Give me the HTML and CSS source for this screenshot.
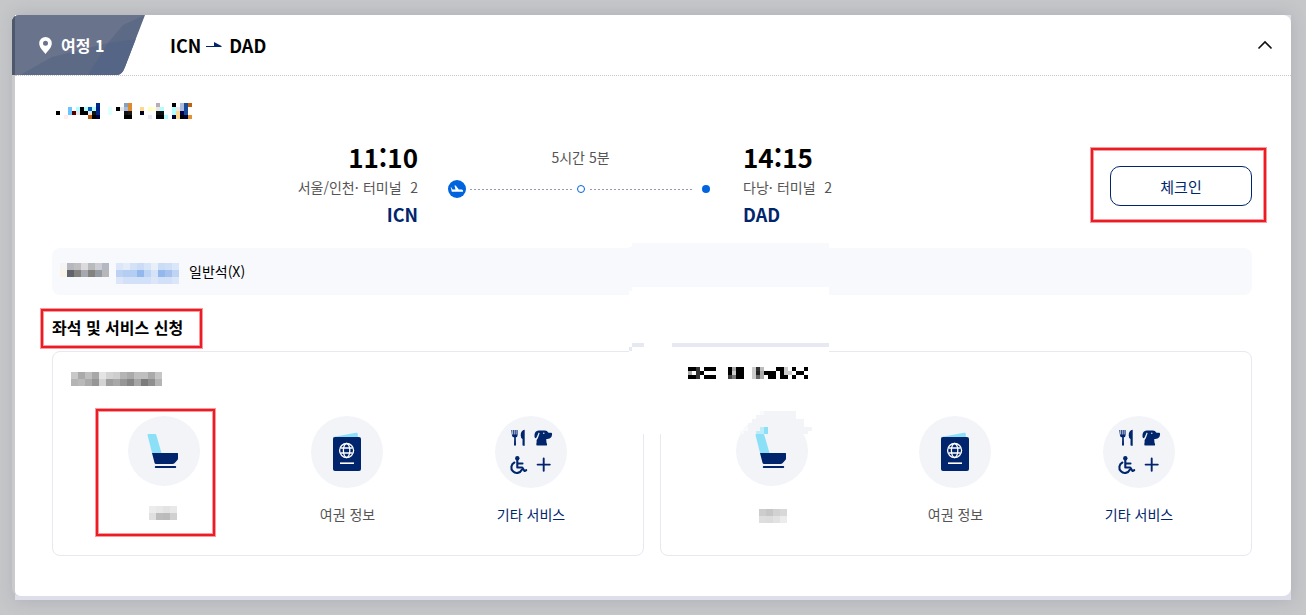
FILE: index.html
```html
<!DOCTYPE html>
<html lang="ko">
<head>
    <meta charset="UTF-8">
    <meta name="viewport" content="width=device-width, initial-scale=1.0">
    <title>여정 1</title>
    <link rel="stylesheet" href="styles.css">
</head>
<body>

<!-- Shared icons -->
<svg class="icon-defs" width="0" height="0">
    <symbol id="icon-seat" viewBox="0 0 72 72">
        <path fill="#8be0f7" d="M19.5 19q0-1 1-1h6.5q1 0 1.3 1L33.5 37H24z"/>
        <path fill="#00256c" d="M24 37h25.5q.5 0 .5.5v5q0 1-.8 1.8l-2.7 2.9q-.8.8-2 .8H28q-1.200 0-1.500-1.200z"/>
        <path fill="#00256c" d="M27.500 50h20q.7 0 .7 1t-.7 1h-20q-.7 0-.7-1t.7-1z"/>
    </symbol>
    <symbol id="icon-passport" viewBox="0 0 72 72">
        <path fill="#8be0f7" d="M22 21l23-4.300q1.800-.2 1.800 1.300v5H22z"/>
        <rect fill="#00256c" x="22" y="21" width="28" height="34" rx="2"/>
        <g fill="none" stroke="#fff" stroke-width="1.300">
            <circle cx="35.600" cy="34.500" r="7"/>
            <ellipse cx="35.600" cy="34.500" rx="3.200" ry="7"/>
            <path d="M29.500 32h12.200M29.500 37h12.200"/>
            <path stroke-width="1.600" d="M29 47.200h14"/>
        </g>
    </symbol>
    <symbol id="icon-etc" viewBox="0 0 72 72">
        <g fill="#00256c">
            <path d="M16.300 14h1v4.500h.9V14h1.200v4.500h.9V14h1.100v4.500h.5V14h.7v5q0 2-1.800 2.600l.2 7.200q0 1-1 1t-1-1l.2-7.200q-2.300-.6-2.300-2.600zM29.700 13.700v16h-1.400q-.8 0-.8-.8v-6q-1.800-.5-1.800-3.700 0-5 4-5.500z"/>
            <path d="M43.500 14.500h6.500q2 0 3.500 2.300h2.800q.9.100.8 1.600-.2 3.200-2.500 4.200-1.200.4-3.300.3v1.600q0 2 .7 3.500.5 1.500-.7 1.500h-9q-1.200 0-1-1.300.5-2 .3-4.300.8-.7 1.400-2.200l1.600-4.500-.9-.6-2.200 5q-.8 1.200-1.700.2-.5-.8-.3-3 .4-4 4-4.300z"/>
            <circle cx="22.300" cy="42.300" r="2.200"/>
        </g>
        <circle cx="48.800" cy="17.300" r=".7" fill="#f2f4f8"/>
        <g fill="none" stroke="#00256c" stroke-width="2.100" stroke-linecap="round" stroke-linejoin="round">
            <path d="M22.300 44v7.500h5l2.200 3.500 1.700-.8M22.300 47.500h5.200M19.400 46.500a5.500 5.500 0 1 0 7.400 7.300"/>
            <path stroke-width="1.900" d="M48.700 42.500v12.200M42.600 48.600h12.200"/>
        </g>
    </symbol>
</svg>

<div class="journey-wrap">
    <div class="journey-edge"></div>
    <section class="journey">
        <header class="journey-header">
            <div class="journey-tab">
                <svg class="tab-shape" width="133" height="60" viewBox="0 0 133 60">
                    <defs>
                        <clipPath id="tabClip"><path d="M8 0h125l-20 52q-3 8-8 8H0V8q0-8 8-8z"/></clipPath>
                    </defs>
                    <g clip-path="url(#tabClip)">
                        <path fill="#5d6a86" d="M0 0h133v60H0z"/>
                        <path fill="#69738b" d="M0 0h133L111 10 96 28 40 42 8 60H0z"/>
                        <path fill="#546585" d="M96 28l37-5v37H76z"/>
                        <path fill="#4d586c" d="M0 0h3v60H0z"/>
                    </g>
                </svg>
                <svg class="pin" width="13" height="17" viewBox="0 0 13 17">
                    <path fill="#fff" fill-rule="evenodd" d="M6.500 0A6.300 6.300 0 0 0 .2 6.300C.2 10.500 4 14 6.500 17 9 14 12.800 10.500 12.800 6.300A6.300 6.300 0 0 0 6.500 0zm0 3.800a2.500 2.500 0 1 1 0 5 2.500 2.500 0 0 1 0-5z"/>
                </svg>
                <span class="tab-label">여정 1</span>
            </div>
            <h2 class="journey-title">
                <span>ICN</span>
                <svg width="16" height="6" viewBox="0 0 16 6"><path fill="#00256c" d="M0 4h8V0l7.500 4v1H0z"/></svg>
                <span>DAD</span>
            </h2>
            <svg class="chevron" width="16" height="10" viewBox="0 0 16 10"><path fill="none" stroke="#111" stroke-width="1.600" d="M1.500 8.500L8 2l6.500 6.500"/></svg>
        </header>

        <div class="journey-body">
            <svg class="mosaic mosaic-name" data-size="4" data-cells="- - - - - - - - - - 00268a - - - - - - 8aa0b8 e08a30 - - - - - - b8aeb4 - - - 000 - abd 184a98 c06010/- - - 6cc4ff - b0ffff 000 b0ffff 0060c0 b0ffff 002080 - - e0ffff - 000 e8e8e8 abd e08a30 - - ffd890 - ffffb8 ffffd8 e8e8e8 b0ffff - - b0ffff e8e8e8 abd 184a98 -/000 - - 6cc4ff 500 e8e8e8 000 000 e8e8e8 111 00268a - - e0ffff - - - 111 1a1a1a - - 002 - - - 111 111 - - b0ffff ffd890 005 184a98 -/- - fee - - - - - c06010 000 003 - - - - - - 000 000 - - - - e8e8f8 - 000 000 b0ffff - 003 ffd890 000 003 e89030"></svg>

            <div class="route">
                <div class="place place-from">
                    <strong class="time">11:10</strong>
                    <span class="terminal">서울/인천· 터미널 &nbsp;2</span>
                    <strong class="airport">ICN</strong>
                </div>
                <div class="timeline">
                    <span class="duration">5시간 5분</span>
                    <div class="track">
                        <svg width="18" height="18" viewBox="0 0 18 18">
                            <circle cx="9" cy="9" r="9" fill="#0064de"/>
                            <path fill="#fff" d="M3 7l1.500 2.400h3L6.500 5.500h1.200l3.100 3.900h3q1.200.2 1.200 1.300v1H3.800L2.700 7z"/>
                        </svg>
                        <span class="dots"></span>
                        <span class="stop stop-via"></span>
                        <span class="dots"></span>
                        <span class="stop stop-end"></span>
                    </div>
                </div>
                <div class="place">
                    <strong class="time">14:15</strong>
                    <span class="terminal">다낭· 터미널 &nbsp;2</span>
                    <strong class="airport">DAD</strong>
                </div>
                <div class="checkin">
                    <button type="button" class="checkin-button">체크인</button>
                    <span class="mark mark-checkin"></span>
                </div>
            </div>

            <div class="fare">
                <svg class="mosaic" data-size="7" data-cells="f4f4f5 b6b7bd bfbfc1 dcdadd b8babc cccdd3 b4b8c2/faf3e9 61636d 83827f a5a9af 83827f 949ba3 b7b7ba"></svg>
                <svg class="mosaic mosaic-fare" data-size="7" data-cells="dbe6f8 e4ecfa d4e2f7 cddcf6 d7e5f9 e9eff9 cbdcf6 cfdff7 dae6f9/bdd2f2 b4cdf2 b4cdf2 92b8ed bdd4f4 d5e2f8 92b8ed a7c1ef bfd3f3/dce6f8 d2e1f7 d2e1f7 d2e1f7 d2e1f7 dce6f8 d2e1f7 d2e1f7 dbe6f8"></svg>
                <span>일반석(X)</span>
            </div>

            <h3 class="service-title">좌석 및 서비스 신청<span class="mark mark-title"></span></h3>

            <div class="passengers">
                <div class="passenger">
                    <svg class="mosaic mosaic-passenger" data-size="7" data-cells="c8c8c8 aaa bfbfbf a8a8a8 e4e4e4 d3d3d3 cecece b4b4b4 aaa bfbfbf bfbfbf aaa c6c6c6/b4b4b4 b9b9b9 aaa 969696 d3d3d3 9e9e9e a8a8a8 969696 858585 a5a5a5 7c7c7c 8f8f8f b4b4b4"></svg>
                    <div class="services">
                        <div class="service">
                            <span class="service-icon icon-flat"><svg><use href="#icon-seat"/></svg></span>
                            <svg class="mosaic mosaic-seat" data-size="7" data-cells="ececec e8e8e8 e3e3e3 e8e8e8/e0e0e0 bdbdbd bbb d0d0d0"></svg>
                            <span class="mark mark-seat"></span>
                        </div>
                        <div class="service">
                            <span class="service-icon"><svg><use href="#icon-passport"/></svg></span>
                            <span class="service-label">여권 정보</span>
                        </div>
                        <div class="service">
                            <span class="service-icon"><svg><use href="#icon-etc"/></svg></span>
                            <span class="service-label active">기타 서비스</span>
                        </div>
                    </div>
                </div>
                <div class="passenger">
                    <svg class="mosaic mosaic-passenger second" data-size="4" data-cells="000 000 333 - 000 000 000 - - - 000 aaa 000 000 - - ccc 333 bbb - - - 000 000 ccc - 000 - - 000/aaa - 333 000 - - - - - - 000 ccc 000 000 - - ccc 222 aaa 000 000 000 - 000 ccc ccc - 000 000 -/000 000 333 - 000 000 000 - - - 444 777 000 000 - - ccc 666 aaa - 000 000 - 000 000 - 000 - - 000"></svg>
                    <div class="services">
                        <div class="service">
                            <span class="service-icon icon-flat"><svg><use href="#icon-seat"/></svg></span>
                            <svg class="mosaic mosaic-seat second" data-size="7" data-cells="cdcdcd c6c6c6 d2d2d2 d8d8d8/dedede dcdcdc e2e2e2 ececec"></svg>
                            <svg class="seat-smudge" width="76" height="23" viewBox="0 0 76 23" shape-rendering="crispEdges">
                                <path fill="#f9fafc" d="M24 0h4v4h-4zM8 16h4v4H8zM4 20h4v3H4z"/>
                                <path fill="#f2f4f8" d="M28 0h32v8h8v8h8v4h-4v3H8v-3h4v-8h4V8h4V4h8z"/>
                                <path fill="#bcecf8" d="M24 16h4v7h-8v-3h4z"/>
                                <path fill="#8be0f7" d="M28 16h4v7h-4z"/>
                            </svg>
                        </div>
                        <div class="service">
                            <span class="service-icon"><svg><use href="#icon-passport"/></svg></span>
                            <span class="service-label">여권 정보</span>
                        </div>
                        <div class="service">
                            <span class="service-icon"><svg><use href="#icon-etc"/></svg></span>
                            <span class="service-label active">기타 서비스</span>
                        </div>
                    </div>
                </div>

                <!-- Erased strip between the fare bar and the passenger boxes -->
                <svg class="erased" width="200" height="191" viewBox="0 0 200 191" shape-rendering="crispEdges">
                    <path fill="#f8f9fd" d="M3 0h197v5H0V4h3z"/>
                    <path fill="#fff" d="M3 44h197v9H0v-5h3zM0 108h200v6H0zM11 108h28v83H11z"/>
                    <path fill="#e7e9f2" d="M3 100h12v4H3zM43 100h157v4H43zM0 104h3v4H0z"/>
                </svg>
            </div>
        </div>
    </section>
</div>

<script src="script.js"></script>
</body>
</html>
```

FILE: styles.css
```css
* {
    box-sizing: border-box;
}

body {
    margin: 0;
    padding: 15px;
    height: 615px;
    background: #c6c7c9;
    font-family: 'Noto Sans CJK KR', 'Noto Sans', sans-serif;
    font-size: 14px;
    color: #000;
    overflow: hidden;
}

h2,
h3 {
    margin: 0;
}

.icon-defs {
    position: absolute;
}

.mosaic {
    display: block;
    flex: none;
}

/* Journey card */
.journey-wrap {
    position: relative;
    height: 585px;
    background: #dcdfe9;
    box-shadow: 0 0 16px rgba(70, 75, 95, 0.2);
}

.journey-edge {
    position: absolute;
    left: -3px;
    top: 0;
    width: 20px;
    height: 581px;
    background: #cacacc;
    border-radius: 8px 0 0 8px;
}

.journey {
    position: relative;
    height: 581px;
    background: #fff;
    border-radius: 0 8px 8px 5px;
}

.journey-header {
    display: flex;
    align-items: center;
    height: 61px;
    border-bottom: 1px dotted #c8c8cc;
}

.journey-tab {
    position: relative;
    display: flex;
    align-items: center;
    width: 133px;
    height: 60px;
    margin-left: -3px;
    padding-left: 27px;
    color: #fff;
}

.tab-shape {
    position: absolute;
    left: 0;
    top: 0;
}

.pin,
.tab-label {
    position: relative;
}

.tab-label {
    margin-left: 9px;
    font-size: 16px;
    font-weight: 700;
    line-height: 24px;
}

.journey-title {
    display: flex;
    align-items: center;
    gap: 5px;
    margin-left: 25px;
    padding-bottom: 1px;
    font-size: 18px;
    font-weight: 700;
    line-height: 26px;
}

.journey-title span:last-child {
    margin-left: 2px;
}

.chevron {
    margin-left: auto;
    margin-right: 18px;
}

.journey-body {
    padding: 27px 39px 0 37px;
}

.mosaic-name {
    margin-left: 4px;
}

/* Route */
.route {
    display: flex;
    margin-top: 23px;
    height: 83px;
}

.place {
    display: flex;
    flex-direction: column;
}

.place-from {
    width: 366px;
    text-align: right;
}

.time {
    font-size: 26px;
    line-height: 30px;
}

.terminal {
    line-height: 30px;
    word-spacing: 0.4px;
    color: #555;
}

.airport {
    font-size: 18px;
    line-height: 24px;
    font-weight: 700;
    color: #00256c;
}

.timeline {
    width: 262px;
    margin: 5px 33px 0 30px;
    text-align: center;
}

.duration {
    display: block;
    padding-left: 3px;
    line-height: 20px;
    color: #555;
}

.track {
    display: flex;
    align-items: center;
    height: 18px;
    margin-top: 13px;
}

.dots {
    width: 102px;
    height: 1px;
    background: repeating-linear-gradient(90deg, #9598b2 0, #9598b2 2px, transparent 2px, transparent 4px);
}

.track svg {
    margin-right: 4px;
}

.stop {
    width: 8px;
    height: 8px;
    border-radius: 50%;
}

.stop-via {
    margin: 0 5px;
    border: 1px solid #0064de;
}

.stop-end {
    margin-left: 10px;
    background: #0064de;
}

.checkin {
    position: relative;
    margin: 24px 0 0 auto;
    height: 40px;
}

.checkin-button {
    display: block;
    width: 142px;
    height: 40px;
    padding: 0;
    border: 1px solid #00256c;
    border-radius: 10px;
    background: #fff;
    color: #00256c;
    font-family: inherit;
    font-size: 15px;
}

/* Red marks */
.mark {
    position: absolute;
    border: 2px solid #ed1c24;
    box-shadow: 0 0 0 1px #f79a9e, inset 0 0 0 1px #f79a9e;
    pointer-events: none;
}

.mark-checkin {
    left: -19px;
    top: -18px;
    width: 175px;
    height: 74px;
}

.mark-title {
    left: -11px;
    top: -6px;
    width: 161px;
    height: 39px;
}

.mark-seat {
    left: 25px;
    top: -7px;
    width: 119px;
    height: 127px;
}

/* Fare bar */
.fare {
    display: flex;
    align-items: flex-start;
    height: 47px;
    margin-top: 23px;
    padding: 15px 8px 0;
    border-radius: 8px;
    background: #f8f9fd;
    line-height: 16px;
}

.mosaic-fare {
    margin: 0 10px 0 7px;
}

.service-title {
    position: relative;
    margin-top: 20px;
    height: 24px;
    font-size: 16px;
    font-weight: 700;
    line-height: 24px;
}

/* Passenger boxes */
.passengers {
    position: relative;
    display: grid;
    grid-template-columns: 1fr 1fr;
    gap: 16px;
    margin-top: 12px;
}

.passenger {
    height: 205px;
    padding: 0 18px;
    border: 1px solid #e7e8f0;
    border-radius: 8px;
}

.mosaic-passenger {
    margin-top: 20px;
}

.mosaic-passenger.second {
    margin: 15px 0 0 9px;
}

.services {
    display: grid;
    grid-template-columns: repeat(3, 184px);
    margin-top: 30px;
}

.second + .services {
    margin-top: 37px;
}

.service {
    position: relative;
    display: flex;
    flex-direction: column;
    align-items: center;
}

.service-icon {
    width: 72px;
    height: 72px;
    border-radius: 50%;
    background: #f2f4f8;
}

.service-icon svg {
    display: block;
    width: 72px;
    height: 72px;
}

.icon-flat {
    height: 70px;
    margin-left: 2px;
}

.service-label {
    margin-top: 16px;
    padding-left: 1px;
    line-height: 20px;
    color: #555;
}

.service-label.active {
    padding-left: 0;
    color: #00256c;
}

.mosaic-seat {
    margin: 20px 0 0;
}

.mosaic-seat.second {
    margin: 23px 0 0 4px;
}

.seat-smudge {
    position: absolute;
    left: 57px;
    top: -5px;
}

.erased {
    position: absolute;
    left: 577px;
    top: -108px;
}
```

FILE: script.js
```js
// Draw the blurred-out names: rows are split by "/", cells by a space
document.querySelectorAll('.mosaic').forEach(function (svg) {
    const size = Number(svg.dataset.size);
    const rows = svg.dataset.cells.split('/').map(row => row.split(' '));

    svg.setAttribute('width', rows[0].length * size);
    svg.setAttribute('height', rows.length * size);
    svg.setAttribute('shape-rendering', 'crispEdges');

    rows.forEach(function (row, y) {
        row.forEach(function (color, x) {
            if (color === '-') return;
            const rect = document.createElementNS('http://www.w3.org/2000/svg', 'rect');
            rect.setAttribute('x', x * size);
            rect.setAttribute('y', y * size);
            rect.setAttribute('width', size);
            rect.setAttribute('height', size);
            rect.setAttribute('fill', '#' + color);
            svg.appendChild(rect);
        });
    });
});
```
